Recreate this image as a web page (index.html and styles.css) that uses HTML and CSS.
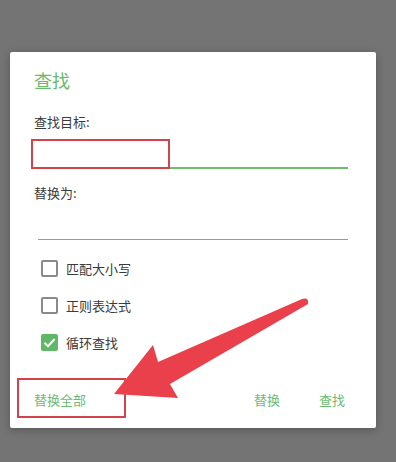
FILE: index.html
```
<!DOCTYPE html>
<html lang="zh-CN">
<head>
    <meta charset="UTF-8">
    <meta name="viewport" content="width=device-width, initial-scale=1.0">
    <title>查找</title>
    <link rel="stylesheet" href="styles.css">
</head>
<body>
    <div class="dialog">
        <h1 class="title">查找</h1>

        <!-- Find field -->
        <label class="field-label">查找目标:</label>
        <div class="field active">
            <span class="mark mark-input"></span>
        </div>

        <!-- Replace field -->
        <label class="field-label replace-label">替换为:</label>
        <div class="field"></div>

        <!-- Options -->
        <div class="options">
            <div class="option"><span class="checkbox"></span><span>匹配大小写</span></div>
            <div class="option"><span class="checkbox"></span><span>正则表达式</span></div>
            <div class="option">
                <span class="checkbox checked">
                    <svg viewBox="0 0 17 17" width="17" height="17"><path d="M3.5 8.8 L7 12.2 L13.6 5" fill="none" stroke="#fff" stroke-width="2"/></svg>
                </span>
                <span>循环查找</span>
            </div>
        </div>

        <!-- Buttons -->
        <div class="actions">
            <button class="btn btn-all">替换全部<span class="mark mark-btn"></span></button>
            <div class="spacer"></div>
            <button class="btn">替换</button>
            <button class="btn">查找</button>
        </div>
    </div>

    <svg class="arrow" viewBox="0 0 396 462" width="396" height="462">
        <path d="M114 394 L153 345 L158 362 L302 299 Q309 297 308 304 L170 384 L178 398 Z" fill="#e9404b"/>
    </svg>
</body>
</html>
```

FILE: styles.css
```
body {
    margin: 0;
    width: 396px;
    height: 462px;
    background-color: #747474;
    font-family: "Noto Sans CJK SC", "Noto Sans", sans-serif;
    position: relative;
    overflow: hidden;
}

.dialog {
    position: absolute;
    left: 10px;
    top: 52px;
    width: 366px;
    height: 376px;
    box-sizing: border-box;
    background-color: #fff;
    border-radius: 2px;
    box-shadow: 0 2px 8px rgba(0,0,0,0.25);
    padding: 16px 28px 0 24px;
}

.title {
    margin: 0;
    font-size: 18px;
    line-height: 24px;
    font-weight: normal;
    color: #6bb96f;
}

.field-label {
    display: block;
    margin-top: 21px;
    font-size: 13px;
    line-height: 18px;
    color: #3b3b3b;
}

.replace-label {
    margin-top: 15px;
}

.field {
    position: relative;
    margin-left: 4px;
    height: 37px;
    border-bottom: 1px solid #9a9a9a;
}

.field.active {
    height: 36px;
    border-bottom: 2px solid #6cbf6c;
}

.mark {
    position: absolute;
    border: 2px solid #d3434c;
    box-sizing: border-box;
}

.mark-input {
    left: -7px;
    top: 8px;
    width: 139px;
    height: 30px;
}

.options {
    margin-top: 10px;
    padding-left: 7px;
}

.option {
    display: flex;
    align-items: center;
    gap: 8px;
    height: 37px;
    font-size: 13px;
    color: #3b3b3b;
}

.checkbox {
    width: 17px;
    height: 17px;
    box-sizing: border-box;
    border: 2px solid #8a8a8a;
    border-radius: 2px;
    display: flex;
}

.checkbox.checked {
    border: none;
    background-color: #5fb865;
}

.actions {
    display: flex;
    align-items: center;
    margin-top: 20px;
    height: 36px;
    margin-right: 3px;
}

.spacer {
    flex: 1;
}

.btn {
    position: relative;
    background: none;
    border: none;
    padding: 0;
    font-family: inherit;
    font-size: 13px;
    color: #6dbb72;
    margin-left: 39px;
}

.btn-all {
    margin-left: 0;
}

.mark-btn {
    left: -17px;
    top: -12px;
    width: 109px;
    height: 40px;
}

.arrow {
    position: absolute;
    left: 0;
    top: 0;
    pointer-events: none;
}
```
